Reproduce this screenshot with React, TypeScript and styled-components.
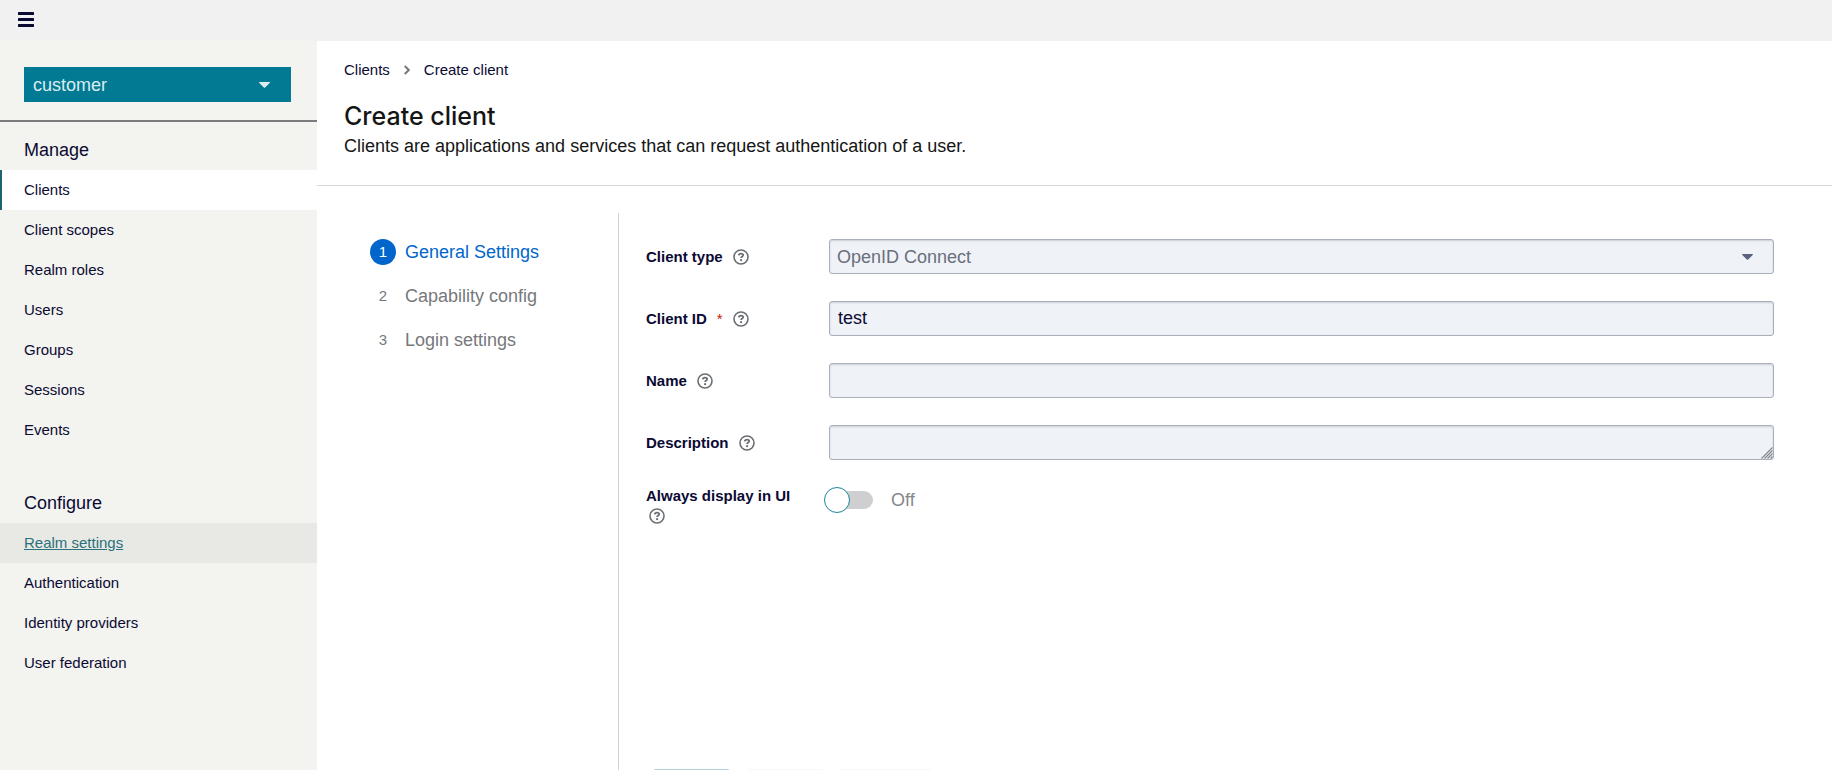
import React from "react";
import styled, { createGlobalStyle } from "styled-components";

const GlobalStyle = createGlobalStyle`
  *, *::before, *::after { box-sizing: border-box; }
  body {
    margin: 0;
    background: #ffffff;
    color: #151515;
    font-family: "Liberation Sans", Arial, sans-serif;
    font-size: 18px;
    line-height: 24px;
  }
  h1, h2, p, ul, ol { margin: 0; padding: 0; }
  ul, ol { list-style: none; }
  button, input, select, textarea { font: inherit; }
`;

const Page = styled.div`
  display: flex;
  flex-direction: column;
  height: 100vh;
  overflow: hidden;
`;

const Masthead = styled.header`
  display: flex;
  align-items: center;
  flex: none;
  height: 41px;
  padding: 0 18px 2px;
  background: #f1f1f1;
`;

const MenuButton = styled.button`
  display: flex;
  padding: 0;
  border: 0;
  background: none;
  color: #0b0a33;
  cursor: pointer;
`;

const Columns = styled.div`
  display: flex;
  flex: 1;
  min-height: 0;
`;

const Sidebar = styled.aside`
  flex: none;
  width: 317px;
  background: #f3f3ef;
`;

const RealmPicker = styled.div`
  padding: 26px 26px 18px 24px;
  border-bottom: 2px solid #7b7b7d;
`;

const RealmButton = styled.button`
  display: flex;
  align-items: center;
  justify-content: space-between;
  width: 100%;
  height: 35px;
  padding: 0 21px 0 9px;
  border: 0;
  background: #027a94;
  color: #dcecf0;
  cursor: pointer;
`;

const NavSection = styled.section`
  margin-bottom: 25px;
`;

const NavTitle = styled.h2`
  height: 48px;
  padding: 16px 24px 0;
  color: #0b0a33;
  font-size: 18px;
  font-weight: 400;
`;

const NavLink = styled.a<{ $state?: "current" | "hover" }>`
  display: block;
  height: 40px;
  padding: 8px 22px;
  border-left: 2px solid ${(p) => (p.$state === "current" ? "#1b6470" : "transparent")};
  background: ${(p) =>
    p.$state === "current" ? "#ffffff" : p.$state === "hover" ? "#e8e8e4" : "transparent"};
  color: ${(p) => (p.$state === "hover" ? "#2a717c" : "#0b0a33")};
  font-size: 15px;
  text-decoration: ${(p) => (p.$state === "hover" ? "underline" : "none")};
`;

const Main = styled.main`
  display: flex;
  flex: 1;
  flex-direction: column;
  min-width: 0;
`;

const PageHeader = styled.div`
  flex: none;
  padding: 17px 27px 27px;
  border-bottom: 1px solid #d8d8d8;
`;

const Crumbs = styled.ol`
  display: flex;
  align-items: center;
  height: 24px;
  color: #0b0a33;
  font-size: 15px;
`;

const Crumb = styled.li`
  display: flex;
  align-items: center;

  a { color: inherit; text-decoration: none; }
  svg { margin: 0 13px; color: #77777c; }
`;

const PageTitle = styled.h1`
  margin-top: 16px;
  font-family: Inter, sans-serif;
  font-size: 25px;
  font-weight: 500;
  line-height: 36px;
`;

const Wizard = styled.div`
  display: flex;
  flex: 1;
  min-height: 0;
  padding-top: 27px;
`;

const Steps = styled.nav`
  flex: none;
  width: 302px;
  padding: 26px 0 0 53px;
  border-right: 1px solid #d2d2d2;
`;

const Step = styled.button<{ $current?: boolean }>`
  display: flex;
  align-items: center;
  gap: 9px;
  height: 26px;
  margin-bottom: 18px;
  padding: 0;
  border: 0;
  background: none;
  color: ${(p) => (p.$current ? "#0066cc" : "#76787b")};
  cursor: pointer;
`;

const StepNumber = styled.span<{ $current?: boolean }>`
  width: 26px;
  border-radius: 50%;
  background: ${(p) => (p.$current ? "#0066cc" : "transparent")};
  color: ${(p) => (p.$current ? "#ffffff" : "#76787b")};
  font-size: 15px;
  line-height: 26px;
  text-align: center;
`;

const Panel = styled.div`
  display: flex;
  flex: 1;
  flex-direction: column;
  min-width: 0;
`;

const Form = styled.form`
  display: flex;
  flex: 1 0 auto;
  flex-direction: column;
  gap: 27px;
  padding: 26px 58px 0 27px;
`;

const Row = styled.div`
  display: grid;
  grid-template-columns: 156px minmax(0, 1fr);
  column-gap: 27px;
  min-height: 35px;
`;

const LabelCell = styled.div<{ $wrap?: boolean }>`
  display: flex;
  flex-wrap: ${(p) => (p.$wrap ? "wrap" : "nowrap")};
  align-items: center;
  align-content: flex-start;
  align-self: start;
  gap: 3px 7px;
  min-height: 35px;
  color: #0b0a33;
  font-size: 15px;
  font-weight: 700;
  line-height: 18px;
`;

const Required = styled.span`
  margin-left: 10px;
  color: #c9190b;
  font-weight: 400;
`;

const HelpButton = styled.button`
  display: flex;
  margin: 0 0 0 3px;
  padding: 0;
  border: 0;
  background: none;
  color: #6a6e73;
  cursor: pointer;
`;

const field = `
  display: block;
  width: 100%;
  height: 35px;
  border: 1px solid #a9b0bc;
  border-radius: 3px;
  background: #eff3f8;
  box-shadow: inset 0 1px 2px rgba(60, 70, 90, 0.2);
  color: #0b0a33;
  outline: 0;
`;

const TextInput = styled.input`
  ${field}
  padding: 0 8px;
`;

const FieldBox = styled.div`
  position: relative;
  color: #5b6280;
`;

const TextArea = styled.textarea`
  ${field}
  padding: 5px 8px;
  resize: vertical;

  &::-webkit-resizer { background: transparent; }
`;

const CaretSlot = styled.span`
  position: absolute;
  top: 15px;
  right: 21px;
  display: flex;
  pointer-events: none;
`;

const GripSlot = styled.span`
  position: absolute;
  right: 1px;
  bottom: 1px;
  display: flex;
  color: #85898e;
  pointer-events: none;
`;

const Select = styled.select`
  ${field}
  padding: 0 7px;
  appearance: none;
  color: #6a6e7a;
`;

const SwitchLabel = styled.label`
  display: flex;
  align-items: center;
  gap: 18px;
  height: 26px;
  color: #85878b;
  cursor: pointer;
`;

const Track = styled.span`
  position: relative;
  width: 44px;
  height: 18px;
  border-radius: 9px;
  background: #cfcfd1;

  input {
    position: absolute;
    top: -4px;
    left: -5px;
    width: 26px;
    height: 26px;
    margin: 0;
    border: 1px solid #1b839d;
    border-radius: 50%;
    background: #ffffff;
    appearance: none;
    cursor: pointer;
  }
`;

const Actions = styled.div`
  display: flex;
  flex: none;
  gap: 18px;
  height: 1px;
  padding-left: 35px;
`;

const ActionButton = styled.button<{ $primary?: boolean; $wide?: boolean }>`
  flex: none;
  width: ${(p) => (p.$wide ? "92px" : "75px")};
  height: 40px;
  padding: 8px 0;
  border: 0;
  border-radius: 1px;
  background: ${(p) => (p.$primary ? "#b3d0dd" : "#f8f8f8")};
`;

const Caret = () => (
  <svg width="11" height="6" viewBox="0 0 10 6" preserveAspectRatio="none" aria-hidden="true">
    <path d="M0.6 0H9.4Q10.4 0.3 9.7 1.1L5.6 5.5Q5 6 4.4 5.5L0.3 1.1Q-0.4 0.3 0.6 0Z" fill="currentColor" />
  </svg>
);

const Help = ({ topic }: { topic: string }) => (
  <HelpButton type="button" aria-label={`Help for ${topic}`}>
    <svg width="16" height="16" viewBox="0 0 16 16" fill="none" aria-hidden="true">
      <circle cx="8" cy="8" r="7" stroke="currentColor" strokeWidth="1.6" />
      <path
        d="M5.7 6.4C5.9 5.1 6.9 4.6 8 4.6C9.2 4.6 10.2 5.2 10.2 6.3C10.2 7.6 8.1 7.5 8.1 9.1"
        stroke="currentColor"
        strokeWidth="1.8"
      />
      <circle cx="8.1" cy="11.2" r="1.1" fill="currentColor" />
    </svg>
  </HelpButton>
);

type NavItem = { label: string; state?: "current" | "hover" };

const sections: { title: string; items: NavItem[] }[] = [
  {
    title: "Manage",
    items: [
      { label: "Clients", state: "current" },
      { label: "Client scopes" },
      { label: "Realm roles" },
      { label: "Users" },
      { label: "Groups" },
      { label: "Sessions" },
      { label: "Events" },
    ],
  },
  {
    title: "Configure",
    items: [
      { label: "Realm settings", state: "hover" },
      { label: "Authentication" },
      { label: "Identity providers" },
      { label: "User federation" },
    ],
  },
];

const steps = ["General Settings", "Capability config", "Login settings"];

export default function App() {
  return (
    <Page>
      <GlobalStyle />
      <Masthead>
        <MenuButton aria-label="Toggle navigation">
          <svg width="16" height="15" viewBox="0 0 16 15" fill="currentColor" aria-hidden="true">
            <rect width="16" height="3" rx="0.5" />
            <rect y="6" width="16" height="3" rx="0.5" />
            <rect y="12" width="16" height="3" rx="0.5" />
          </svg>
        </MenuButton>
      </Masthead>
      <Columns>
        <Sidebar>
          <RealmPicker>
            <RealmButton aria-haspopup="listbox">
              customer
              <Caret />
            </RealmButton>
          </RealmPicker>
          <nav aria-label="Main">
            {sections.map((section) => (
              <NavSection key={section.title}>
                <NavTitle>{section.title}</NavTitle>
                <ul>
                  {section.items.map((item) => (
                    <li key={item.label}>
                      <NavLink href="#" $state={item.state}>
                        {item.label}
                      </NavLink>
                    </li>
                  ))}
                </ul>
              </NavSection>
            ))}
          </nav>
        </Sidebar>
        <Main>
          <PageHeader>
            <Crumbs aria-label="Breadcrumb">
              <Crumb>
                <a href="#">Clients</a>
                <svg width="8" height="10" viewBox="0 0 8 10" fill="none" aria-hidden="true">
                  <path d="M1.8 1L5.8 5L1.8 9" stroke="currentColor" strokeWidth="2" />
                </svg>
              </Crumb>
              <Crumb>Create client</Crumb>
            </Crumbs>
            <PageTitle>Create client</PageTitle>
            <p>Clients are applications and services that can request authentication of a user.</p>
          </PageHeader>
          <Wizard>
            <Steps aria-label="Steps">
              <ol>
                {steps.map((step, i) => (
                  <li key={step}>
                    <Step type="button" $current={i === 0}>
                      <StepNumber $current={i === 0}>{i + 1}</StepNumber>
                      {step}
                    </Step>
                  </li>
                ))}
              </ol>
            </Steps>
            <Panel>
              <Form onSubmit={(e) => e.preventDefault()}>
                <Row>
                  <LabelCell>
                    <label htmlFor="type">Client type</label>
                    <Help topic="Client type" />
                  </LabelCell>
                  <FieldBox>
                    <Select id="type">
                      <option>OpenID Connect</option>
                    </Select>
                    <CaretSlot>
                      <Caret />
                    </CaretSlot>
                  </FieldBox>
                </Row>
                <Row>
                  <LabelCell>
                    <label htmlFor="clientId">
                      Client ID<Required>*</Required>
                    </label>
                    <Help topic="Client ID" />
                  </LabelCell>
                  <TextInput id="clientId" defaultValue="test" />
                </Row>
                <Row>
                  <LabelCell>
                    <label htmlFor="name">Name</label>
                    <Help topic="Name" />
                  </LabelCell>
                  <TextInput id="name" />
                </Row>
                <Row>
                  <LabelCell>
                    <label htmlFor="description">Description</label>
                    <Help topic="Description" />
                  </LabelCell>
                  <FieldBox>
                    <TextArea id="description" />
                    <GripSlot>
                      <svg width="12" height="12" viewBox="0 0 12 12" fill="none" aria-hidden="true">
                        <path d="M0.5 11.5L11.5 0.5M3.5 11.5L11.5 3.5M6.5 11.5L11.5 6.5M9.5 11.5L11.5 9.5" stroke="currentColor" strokeWidth="1.2" />
                      </svg>
                    </GripSlot>
                  </FieldBox>
                </Row>
                <Row>
                  <LabelCell $wrap>
                    <label htmlFor="always">Always display in UI</label>
                    <Help topic="Always display in UI" />
                  </LabelCell>
                  <SwitchLabel>
                    <Track>
                      <input id="always" type="checkbox" role="switch" />
                    </Track>
                    Off
                  </SwitchLabel>
                </Row>
              </Form>
              <Actions>
                <ActionButton $primary aria-label="Next" />
                <ActionButton aria-label="Back" />
                <ActionButton $wide aria-label="Cancel" />
              </Actions>
            </Panel>
          </Wizard>
        </Main>
      </Columns>
    </Page>
  );
}
